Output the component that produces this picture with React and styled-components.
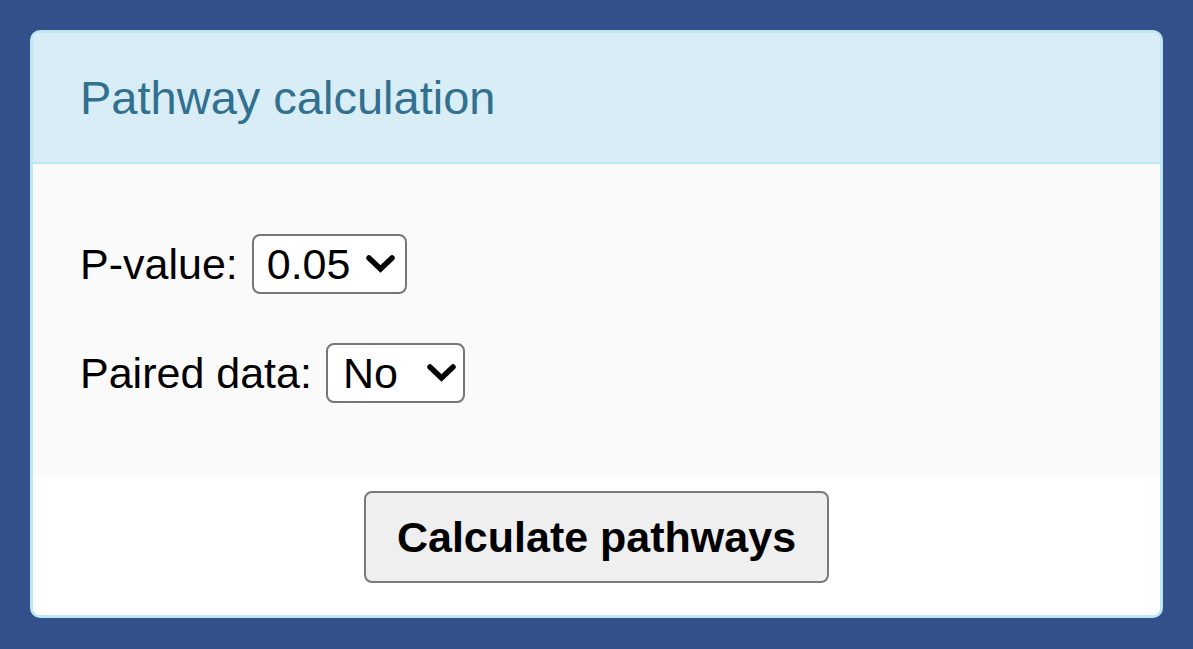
import React from "react";
import styled, { createGlobalStyle } from "styled-components";

const Global = createGlobalStyle`
  html, body {
    margin: 0;
    padding: 0;
    background: #34508a;
  }
  body {
    font-family: "Liberation Sans", Arial, Helvetica, sans-serif;
  }
  #root {
    padding: 30px;
    min-height: 649px;
    box-sizing: border-box;
  }
`;

const Panel = styled.section`
  width: 1133px;
  box-sizing: border-box;
  border: 3px solid #bce8f1;
  border-radius: 10px;
  background: #ffffff;
  overflow: hidden;
`;

const Header = styled.header`
  display: flex;
  align-items: center;
  height: 129px;
  padding: 0 47px;
  background: #d9edf7;
  border-bottom: 2px solid #bce8f1;
`;

const Title = styled.h3`
  margin: 0;
  font-size: 47px;
  line-height: 1;
  font-weight: 400;
  color: #31708f;
`;

const Body = styled.div`
  display: flex;
  flex-direction: column;
  gap: 49px;
  padding: 70px 47px 72px;
  background: #fafafa;
`;

const Row = styled.label`
  display: flex;
  align-items: center;
  gap: 14px;
  font-size: 43px;
  line-height: 1;
  color: #000;
`;

const SelectWrap = styled.span`
  position: relative;
  display: inline-block;
  width: ${(p) => p.$w}px;
  height: 60px;
`;

const Select = styled.select`
  appearance: none;
  -webkit-appearance: none;
  width: 100%;
  height: 100%;
  box-sizing: border-box;
  border: 2px solid #767676;
  border-radius: 8px;
  background: #ffffff;
  color: #000;
  font-family: "Liberation Sans", Arial, Helvetica, sans-serif;
  font-size: 43px;
  padding: 0 0 0 ${(p) => p.$pl}px;
  outline: none;
`;

const Chevron = styled.svg`
  position: absolute;
  right: ${(p) => p.$r}px;
  top: 50%;
  transform: translateY(-50%);
  width: 29px;
  height: 18px;
  pointer-events: none;
`;

const Footer = styled.div`
  display: flex;
  justify-content: center;
  padding: 16px 0 32px;
  background: #ffffff;
`;

const Button = styled.button`
  height: 92px;
  padding: 0 31px;
  box-sizing: border-box;
  border: 2px solid #7a7a7a;
  border-radius: 8px;
  background: #efefef;
  color: #000;
  font-family: "Liberation Sans", Arial, Helvetica, sans-serif;
  font-size: 43px;
  font-weight: 700;
  line-height: 1;
  cursor: pointer;
`;

const ChevronIcon = ({ r }) => (
  <Chevron $r={r} viewBox="0 0 29 18">
    <polyline
      points="3,3 14.5,14 26,3"
      fill="none"
      stroke="#000"
      strokeWidth="5.5"
      strokeLinecap="round"
      strokeLinejoin="miter"
    />
  </Chevron>
);

export default function App() {
  return (
    <>
      <Global />
      <Panel>
        <Header>
          <Title>Pathway calculation</Title>
        </Header>
        <Body>
          <Row>
            P-value:
            <SelectWrap $w={155}>
              <Select $pl={13} defaultValue="0.05">
                <option>0.05</option>
                <option>0.01</option>
                <option>0.001</option>
              </Select>
              <ChevronIcon r={12} />
            </SelectWrap>
          </Row>
          <Row>
            Paired data:
            <SelectWrap $w={139}>
              <Select $pl={15} defaultValue="No">
                <option>No</option>
                <option>Yes</option>
              </Select>
              <ChevronIcon r={9} />
            </SelectWrap>
          </Row>
        </Body>
        <Footer>
          <Button>Calculate pathways</Button>
        </Footer>
      </Panel>
    </>
  );
}
